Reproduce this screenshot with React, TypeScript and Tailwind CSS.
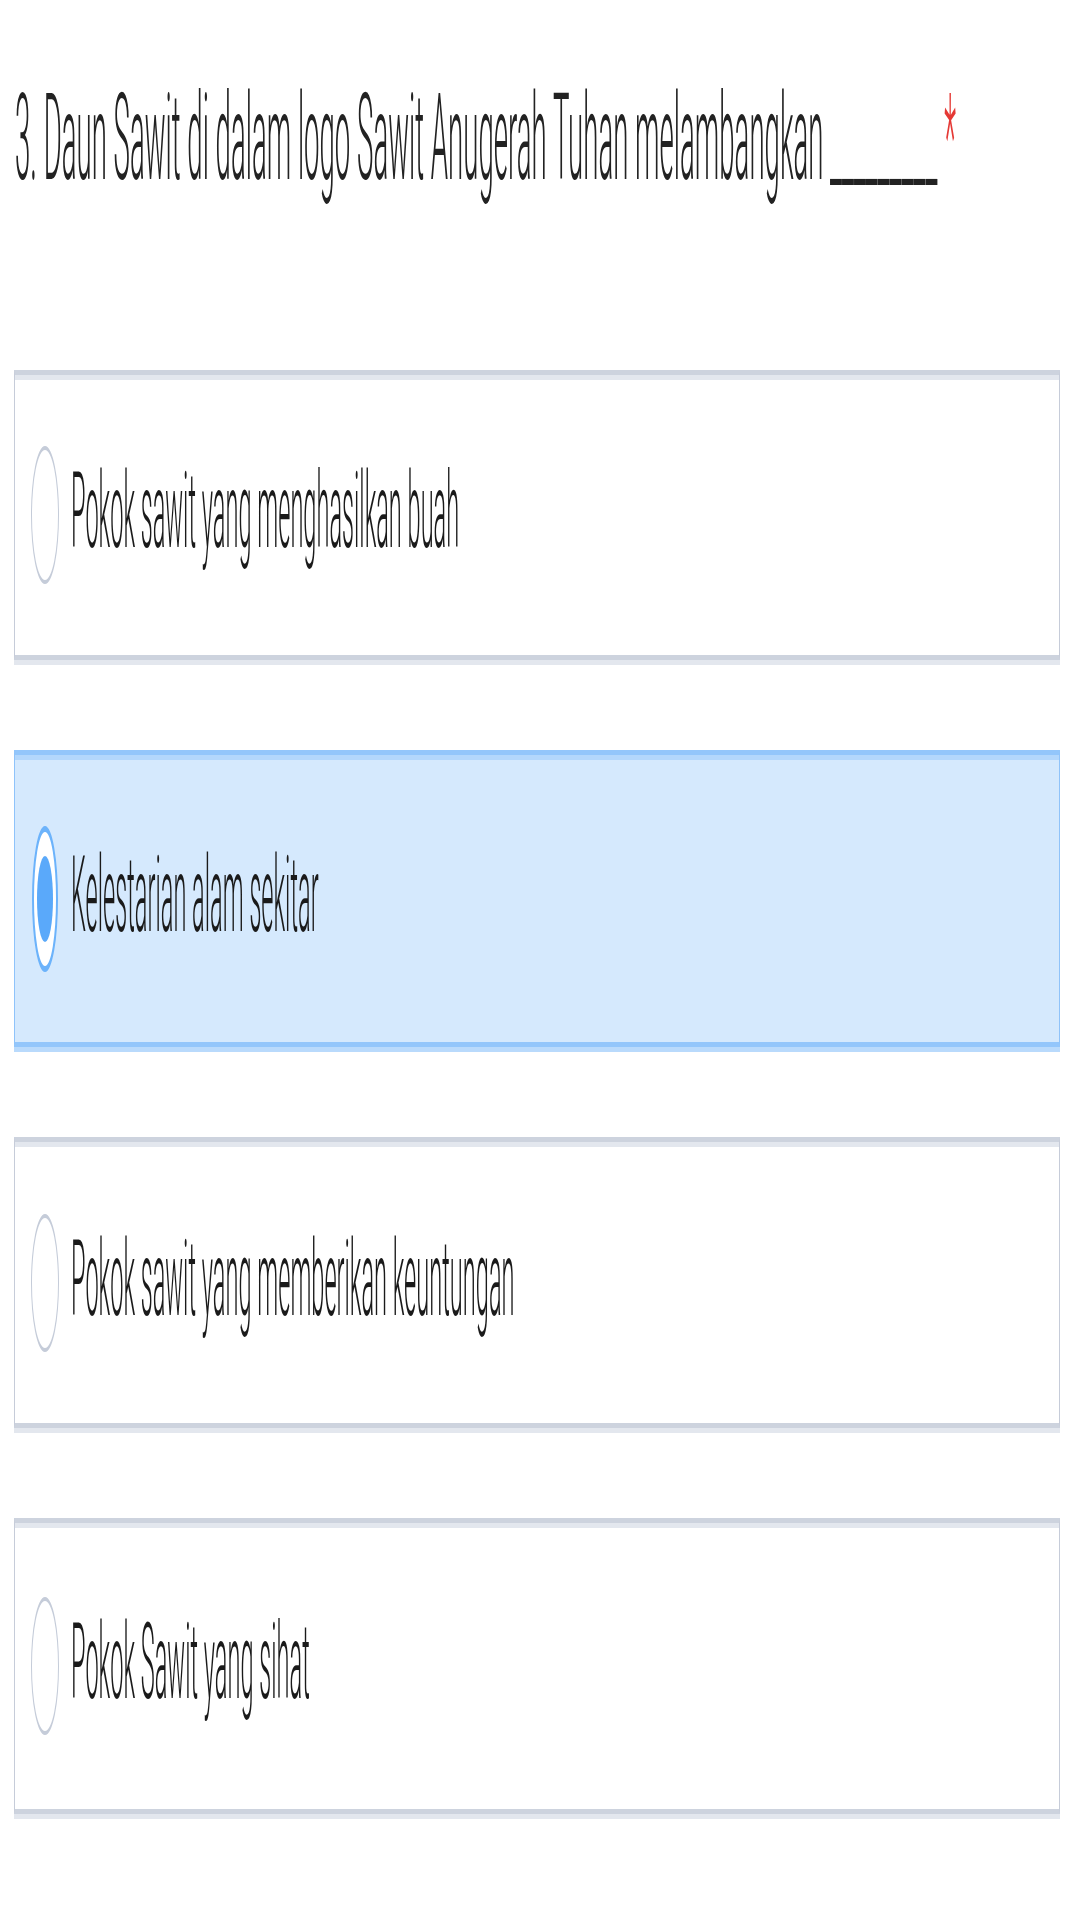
import React from "react";

type Opt = { label: string; h: string; selected: boolean };

const options: Opt[] = [
  { label: "Pokok sawit yang menghasilkan buah", h: "h-[290px]", selected: false },
  { label: "Kelestarian alam sekitar", h: "h-[297px]", selected: true },
  { label: "Pokok sawit yang memberikan keuntungan", h: "h-[291px]", selected: false },
  { label: "Pokok Sawit yang sihat", h: "h-[296px]", selected: false },
];

function Radio({ selected }: { selected: boolean }) {
  if (selected) {
    return (
      <div className="w-[28px] h-[146px] shrink-0 flex items-center justify-center">
        <div className="w-[26px] h-[146px] rounded-[50%] border-x-[2px] border-y-[6px] border-[#6cb3fb] bg-white flex items-center justify-center">
          <div className="w-[16px] h-[86px] rounded-[50%] bg-[#5aa9fa]" />
        </div>
      </div>
    );
  }
  return (
    <div className="w-[28px] h-[138px] shrink-0 rounded-[50%] border-x border-y-[4px] border-[#c5ccd9] bg-white" />
  );
}

function OptionCard({ opt }: { opt: Opt }) {
  const base = "flex items-center pl-[16px] border-x border-y-[5px] " + opt.h;
  const look = opt.selected
    ? "bg-[#d5e9fd] border-x-[#8fc3fa] border-y-[#93c6fb] shadow-[inset_0_5px_0_#b3d7fc,0_5px_0_#b9dafc]"
    : "bg-white border-x-[#c6ccd9] border-y-[#cdd3de] shadow-[inset_0_5px_0_#e3e7ee,0_5px_0_#e3e7ee]";
  return (
    <div className={base + " " + look}>
      <Radio selected={opt.selected} />
      <span className="block ml-[12px] text-[23.6px] font-light leading-none text-[#1a1a1a] scale-y-[4.5] whitespace-nowrap">
        {opt.label}
      </span>
    </div>
  );
}

export default function App() {
  return (
    <div className="min-h-[1920px] bg-white pt-[76px] pl-[14px] pr-[20px] font-['Roboto',sans-serif]">
      <div className="h-[125px] flex items-center pl-[1px]">
        <span className="block text-[27.6px] font-light leading-none text-[#222222] scale-y-[4.4] whitespace-nowrap">
          3. Daun Sawit di dalam logo Sawit Anugerah Tuhan melambangkan _________ <span className="text-[#e53935]">*</span>
        </span>
      </div>
      <div className="mt-[169px] flex flex-col gap-[90px]">
        {options.map((o) => (
          <OptionCard key={o.label} opt={o} />
        ))}
      </div>
    </div>
  );
}
